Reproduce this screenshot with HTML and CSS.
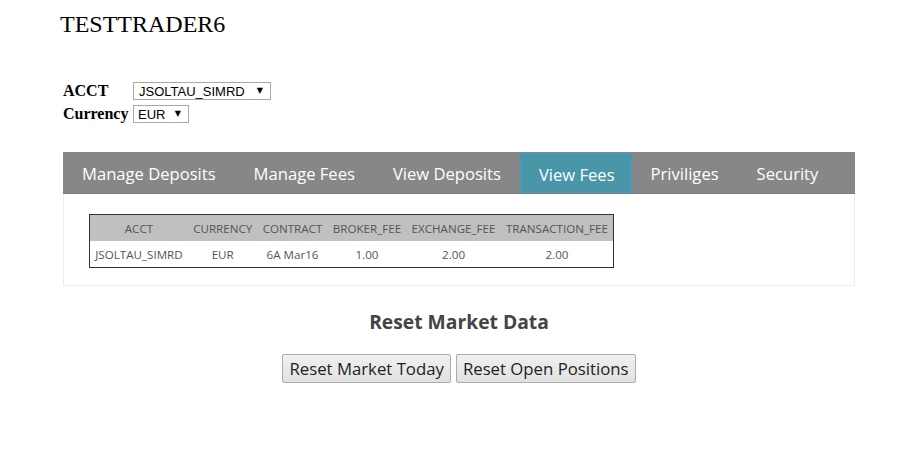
FILE: index.html
```html
<!DOCTYPE html>
<html>
<head>
<meta charset="utf-8">
<title>TESTTRADER6</title>
<link rel="stylesheet" href="styles.css">
</head>
<body>
<div class="page">
  <h1 class="title">TESTTRADER6</h1>
  <div class="filters">
    <label class="flabel">ACCT</label>
    <span class="select select-acct"><span class="sval">JSOLTAU_SIMRD</span><span class="arrow">▼</span></span>
    <label class="flabel">Currency</label>
    <span class="select select-cur"><span class="sval">EUR</span><span class="arrow">▼</span></span>
  </div>
  <nav class="tabs">
    <a class="tab">Manage Deposits</a>
    <a class="tab">Manage Fees</a>
    <a class="tab">View Deposits</a>
    <a class="tab active">View Fees</a>
    <a class="tab">Priviliges</a>
    <a class="tab">Security</a>
  </nav>
  <div class="panel">
    <table class="fees">
      <thead>
        <tr><th>ACCT</th><th>CURRENCY</th><th>CONTRACT</th><th>BROKER_FEE</th><th>EXCHANGE_FEE</th><th>TRANSACTION_FEE</th></tr>
      </thead>
      <tbody>
        <tr><td>JSOLTAU_SIMRD</td><td>EUR</td><td>6A Mar16</td><td>1.00</td><td>2.00</td><td>2.00</td></tr>
      </tbody>
    </table>
  </div>
  <section class="reset">
    <h2 class="reset-title">Reset Market Data</h2>
    <div class="buttons">
      <button class="btn">Reset Market Today</button>
      <button class="btn">Reset Open Positions</button>
    </div>
  </section>
</div>
</body>
</html>
```
FILE: styles.css
```css
html, body {
  margin: 0;
  padding: 0;
  background: #ffffff;
}
body {
  font-family: "Liberation Serif", serif;
  color: #000;
}
.page {
  width: 792px;
  margin-left: 63px;
  padding-top: 10px;
}
.title {
  font-family: "Liberation Serif", serif;
  font-weight: normal;
  font-size: 24px;
  line-height: 28px;
  margin: 0 0 0 -3px;
  color: #000;
}
.filters {
  display: grid;
  grid-template-columns: 70px auto;
  justify-content: start;
  align-items: center;
  row-gap: 5px;
  margin-top: 44px;
}
.flabel {
  font-family: "Liberation Serif", serif;
  font-weight: bold;
  font-size: 16px;
  line-height: 18px;
}
.select {
  display: inline-flex;
  align-items: center;
  justify-content: space-between;
  box-sizing: border-box;
  height: 18px;
  border: 1px solid #a9a9a9;
  background: #fff;
  font-family: "Liberation Sans", Arial, sans-serif;
  font-size: 13px;
  color: #000;
  padding: 0 7px 0 5px;
}
.select-acct { width: 138px; }
.select-cur { width: 56px; height: 18px; padding-left: 4px; }
.arrow {
  font-family: "DejaVu Sans", sans-serif;
  font-size: 8px;
  line-height: 1;
}
.tabs {
  display: flex;
  margin-top: 29px;
  height: 42px;
  background: #878787;
  border-bottom: 1px solid #7a7a7a;
  box-sizing: border-box;
}
.tab {
  display: flex;
  align-items: center;
  flex-shrink: 0;
  white-space: nowrap;
  padding: 2px 18px 0;
  font-family: "Open Sans", "Noto Sans", sans-serif;
  font-size: 16.6px;
  color: #ffffff;
  box-sizing: border-box;
  border: 1px solid transparent;
}
.tab.active {
  background: #4996a8;
  border-color: #4d95d1;
  margin-top: 1px;
  padding-right: 16px;
}
.panel {
  border: 1px solid #ececec;
  border-top: none;
  padding: 20px 25px 17px;
}
.fees {
  border-collapse: collapse;
  border: 1px solid #333;
  font-family: "Open Sans", "Noto Sans", sans-serif;
  font-size: 11.6px;
  color: #555;
}
.fees th {
  background: #c0c0c0;
  font-weight: normal;
  height: 26px;
  padding: 0 5.25px;
  text-align: center;
}
.fees td {
  height: 26px;
  padding: 0 5.25px;
  text-align: center;
}
.reset {
  text-align: center;
}
.reset-title {
  font-family: "Open Sans", "Noto Sans", sans-serif;
  font-weight: bold;
  font-size: 19.3px;
  color: #444;
  margin: 22px 0 19px;
}
.buttons {
  display: flex;
  justify-content: center;
  gap: 5px;
}
.btn {
  font-family: "Open Sans", "Noto Sans", sans-serif;
  font-size: 16.75px;
  color: #222;
  height: 29px;
  padding: 0 6px;
  border: 1px solid #acacac;
  border-radius: 2px;
  background: linear-gradient(#f0f0f0, #e1e1e1);
}
```
